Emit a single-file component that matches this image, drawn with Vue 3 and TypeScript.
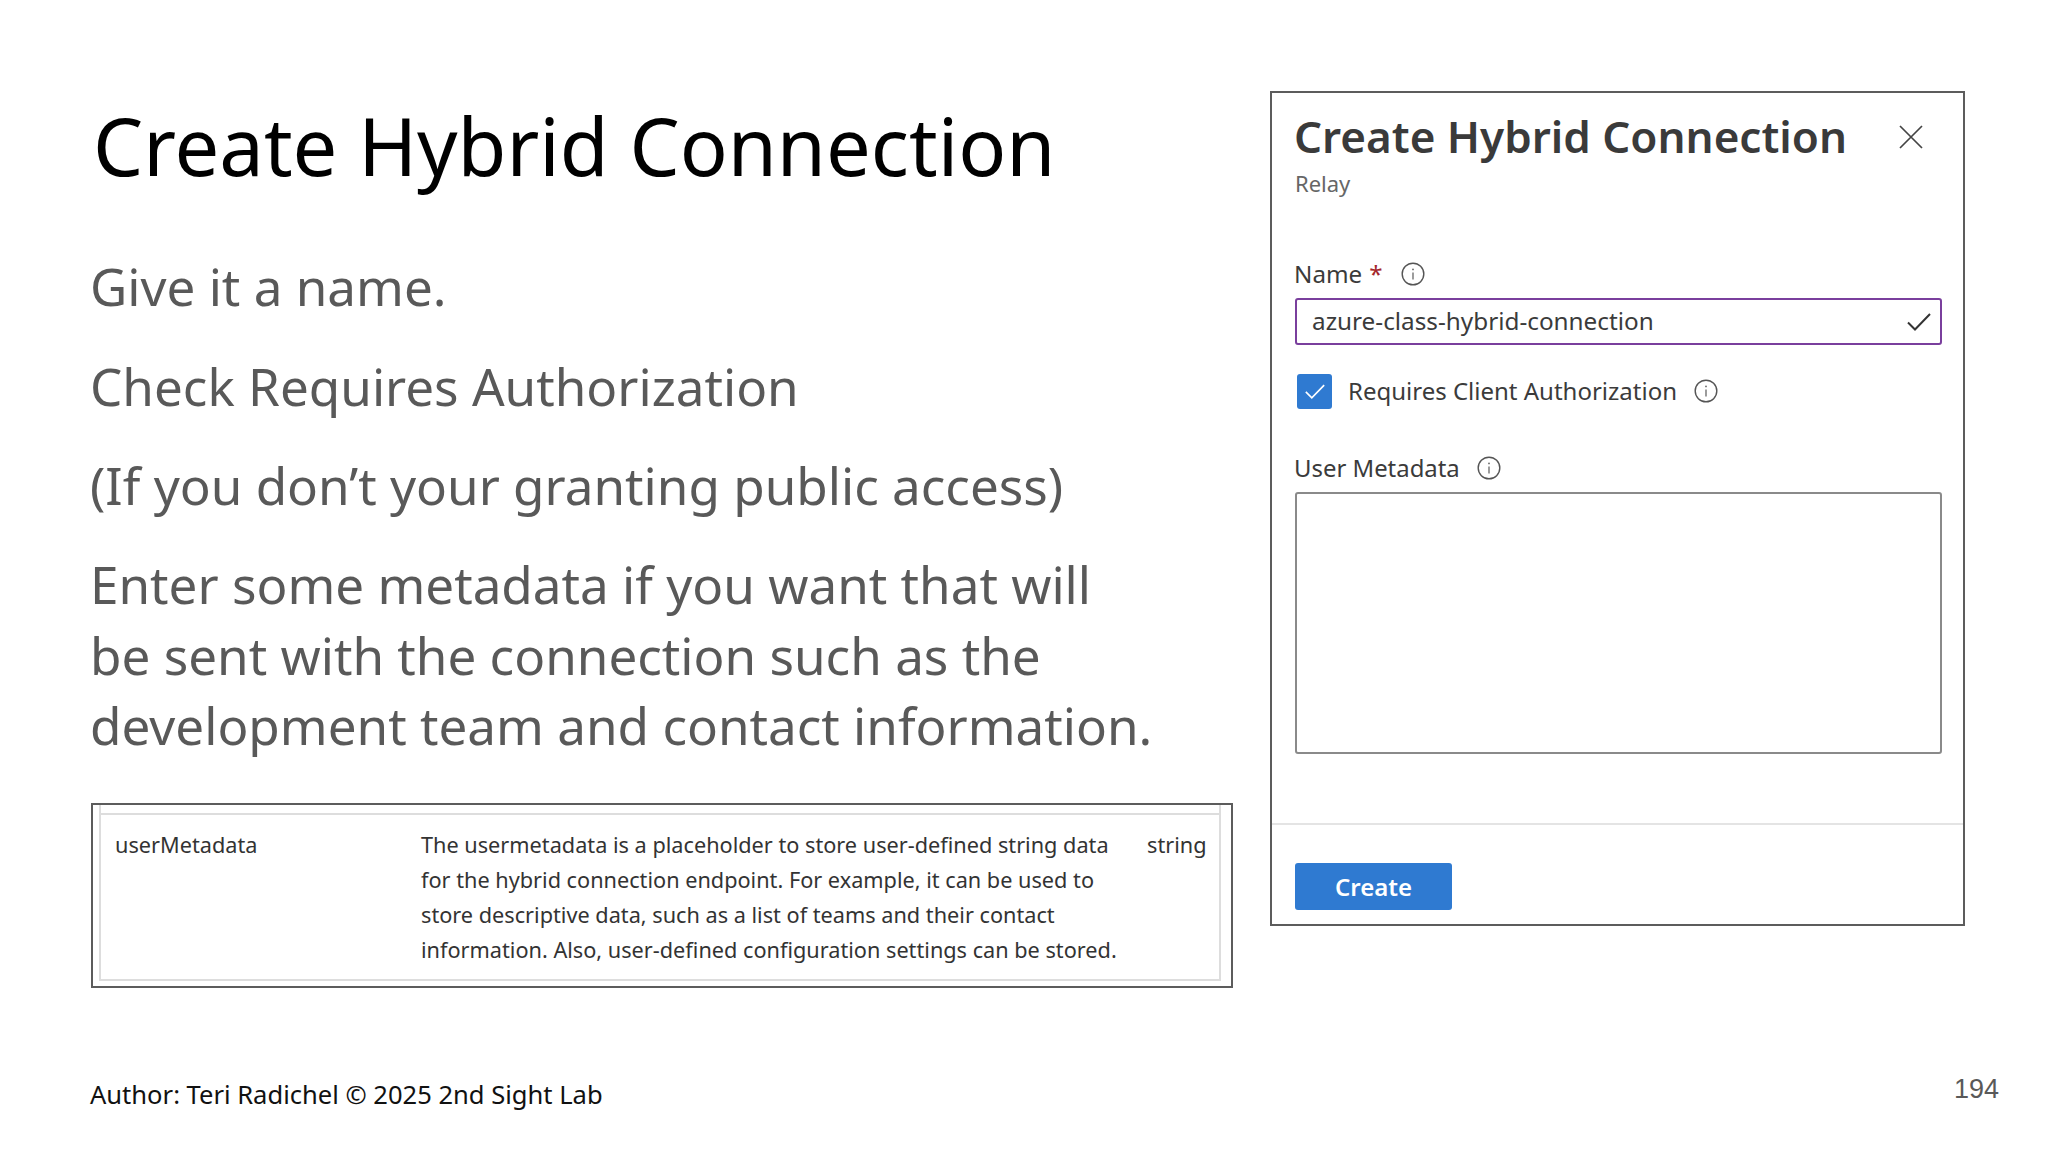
<script setup lang="ts">
const paragraphs: string[] = [
  'Give it a name.',
  'Check Requires Authorization',
  '(If you don’t your granting public access)',
];
const descLines: string[] = [
  'The usermetadata is a placeholder to store user-defined string data',
  'for the hybrid connection endpoint. For example, it can be used to',
  'store descriptive data, such as a list of teams and their contact',
  'information. Also, user-defined configuration settings can be stored.',
];
</script>

<template>
  <div class="slide">
    <div class="main">
      <section class="left">
        <h1 class="title">Create Hybrid Connection</h1>
        <p v-for="p in paragraphs" :key="p" class="para">{{ p }}</p>
        <p class="para last">Enter some metadata if you want that will<br />be sent with the connection such as the<br />development team and contact information.</p>
        <div class="doc">
          <div class="doc-inner">
            <div class="doc-row">
              <span>userMetadata</span>
              <div>
                <div v-for="l in descLines" :key="l" class="nowrap">{{ l }}</div>
              </div>
              <span>string</span>
            </div>
          </div>
        </div>
      </section>

      <section class="panel">
        <div class="panel-body">
          <div class="panel-head">
            <div class="panel-title">Create Hybrid Connection</div>
            <svg class="close" viewBox="0 0 24 24" width="24" height="24"><path d="M1 1 L23 23 M23 1 L1 23" fill="none" stroke="#444" stroke-width="1.7" /></svg>
          </div>
          <div class="relay">Relay</div>

          <div class="label name-label">
            <span>Name</span>
            <span class="star">*</span>
            <svg class="info info-name" viewBox="0 0 24 24" width="24" height="24"><circle cx="12" cy="12" r="10.8" fill="none" stroke="#555" stroke-width="1.4" /><path d="M12 10.5V17.5" stroke="#666" stroke-width="1.3" /><circle cx="12" cy="7.4" r="0.9" fill="#666" /></svg>
          </div>
          <div class="input">
            <span class="input-text">azure-class-hybrid-connection</span>
            <svg viewBox="0 0 24 18" width="24" height="18"><path d="M1 9.5 L8 16.5 L23 1" fill="none" stroke="#333" stroke-width="2" /></svg>
          </div>

          <div class="check-row">
            <span class="checkbox">
              <svg viewBox="0 0 24 18" width="22" height="17"><path d="M2 9.5 L8.5 16 L22 2" fill="none" stroke="#fff" stroke-width="1.8" /></svg>
            </span>
            <span class="check-text">Requires Client Authorization</span>
            <svg class="info" viewBox="0 0 24 24" width="24" height="24"><circle cx="12" cy="12" r="10.8" fill="none" stroke="#555" stroke-width="1.4" /><path d="M12 10.5V17.5" stroke="#666" stroke-width="1.3" /><circle cx="12" cy="7.4" r="0.9" fill="#666" /></svg>
          </div>

          <div class="label meta-label">
            <span>User Metadata</span>
            <svg class="info" viewBox="0 0 24 24" width="24" height="24"><circle cx="12" cy="12" r="10.8" fill="none" stroke="#555" stroke-width="1.4" /><path d="M12 10.5V17.5" stroke="#666" stroke-width="1.3" /><circle cx="12" cy="7.4" r="0.9" fill="#666" /></svg>
          </div>
          <div class="textarea"></div>
        </div>

        <div class="panel-foot">
          <button class="create">Create</button>
        </div>
      </section>
    </div>

    <footer class="footer">
      <span class="author">Author: Teri Radichel © 2025 2nd Sight Lab</span>
      <span class="page">194</span>
    </footer>
  </div>
</template>

<style>
html, body { margin: 0; background: #fff; }
</style>

<style scoped>
.slide {
  width: 2048px;
  height: 1152px;
  background: #fff;
  overflow: hidden;
  font-family: "Noto Sans", sans-serif;
  display: flex;
  flex-direction: column;
  box-sizing: border-box;
}
.main {
  display: flex;
  align-items: flex-start;
  padding: 91px 0 0 90px;
  height: 1056px;
  box-sizing: border-box;
  flex: none;
}
.left { width: 1144px; flex: none; }
.title {
  margin: 4px 0 0 3px;
  font-size: 79.5px;
  line-height: 100px;
  font-weight: 400;
  color: #000;
}
.para {
  margin: 0;
  margin-top: 29px;
  font-size: 51.2px;
  line-height: 70.5px;
  color: #595959;
  white-space: nowrap;
}
.title + .para { margin-top: 56px; }
.para.last { margin-top: 28.5px; }
.doc {
  margin: 42.5px 0 0 1px;
  height: 185px;
  width: 1142px;
  box-sizing: border-box;
  border: 2px solid #5c5c5c;
  padding: 0 10px 5px 6px;
}
.doc-inner {
  height: 100%;
  box-sizing: border-box;
  border: 2px solid #ddd;
  border-top: none;
  padding-top: 8px;
  display: flex;
  flex-direction: column;
}
.doc-row {
  flex: 1;
  box-sizing: border-box;
  border-top: 2px solid #ddd;
  padding: 11.5px 0 0 14px;
  display: grid;
  grid-template-columns: 306px 726px auto;
  font-size: 21.7px;
  line-height: 35px;
  color: #333;
}
.nowrap { white-space: nowrap; }

.panel {
  margin-left: 36px;
  width: 695px;
  height: 835px;
  box-sizing: border-box;
  border: 2px solid #5c5c5c;
  display: flex;
  flex-direction: column;
  flex: none;
  color: #3b3b3b;
}
.panel-body {
  flex: 1;
  padding: 17.5px 21px 0 23px;
  border-bottom: 2px solid #e4e4e4;
}
.panel-head {
  display: flex;
  align-items: center;
  justify-content: space-between;
  height: 50px;
  padding-right: 19px;
}
.panel-title {
  font-size: 44px;
  line-height: 50px;
  font-weight: 600;
  white-space: nowrap;
  color: #3a3a3a;
  margin-left: -1px;
}
.close { flex: none; margin-top: 2px; }
.relay {
  margin-top: 6px;
  font-size: 22px;
  line-height: 32px;
  color: #666;
}
.label {
  display: flex;
  align-items: center;
  font-size: 24.2px;
  line-height: 34px;
  color: #3b3b3b;
}
.name-label { margin-top: 58.5px; margin-left: -1px; }
.star { color: #a4262c; margin-left: 7px; }
.info { margin-left: 17px; flex: none; }
.info-name { margin-left: 18px; }
.input {
  margin-top: 7px;
  height: 47px;
  box-sizing: border-box;
  border: 2px solid #7a3f9d;
  border-radius: 3px;
  display: flex;
  align-items: center;
  justify-content: space-between;
  padding: 0 9px 0 15px;
  font-size: 24.3px;
}
.input-text { margin-top: -3px; }
.check-row {
  margin-top: 28px;
  margin-left: 2px;
  display: flex;
  align-items: center;
  height: 36px;
  font-size: 24px;
}
.checkbox {
  width: 35px;
  height: 35px;
  background: #2f7ad1;
  border-radius: 3px;
  display: flex;
  align-items: center;
  justify-content: center;
  flex: none;
}
.check-text { margin-left: 16px; white-space: nowrap; margin-top: -1px; }
.meta-label { margin-top: 41.5px; font-size: 23.9px; margin-left: -1px; }
.textarea {
  margin-top: 7px;
  height: 262px;
  box-sizing: border-box;
  border: 2px solid #8a8a8a;
  border-radius: 3px;
}
.panel-foot {
  height: 99px;
  flex: none;
  padding: 38px 0 0 23px;
  box-sizing: border-box;
}
.create {
  display: block;
  width: 157px;
  height: 47px;
  border: none;
  border-radius: 3px;
  background: #2f7ad1;
  color: #fff;
  font-family: "Noto Sans", sans-serif;
  font-size: 24px;
  font-weight: 600;
  padding: 0;
}
.footer {
  display: flex;
  justify-content: space-between;
  align-items: center;
  padding: 20px 49px 0 90px;
}
.author {
  font-size: 25.55px;
  line-height: 36px;
  color: #111;
}
.page {
  font-family: "Liberation Sans", sans-serif;
  font-size: 27px;
  color: #595959;
  margin-top: -9px;
}
</style>
